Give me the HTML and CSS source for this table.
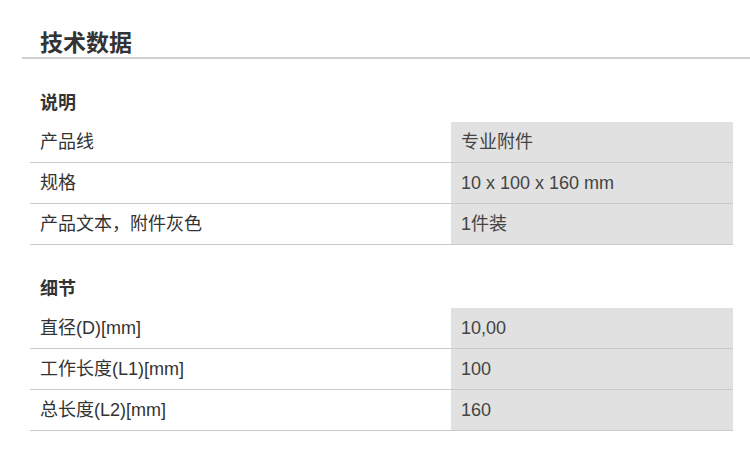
FILE: index.html
```html
<!DOCTYPE html>
<html lang="zh-CN">
<head>
<meta charset="utf-8">
<link rel="stylesheet" href="styles.css">
</head>
<body>
<div class="page">
  <h2 class="title">技术数据</h2>
  <section class="group">
    <h3 class="group-title">说明</h3>
    <div class="table">
      <div class="row"><div class="label">产品线</div><div class="value">专业附件</div></div>
      <div class="row"><div class="label">规格</div><div class="value">10 x 100 x 160 mm</div></div>
      <div class="row"><div class="label">产品文本，附件灰色</div><div class="value">1件装</div></div>
    </div>
  </section>
  <section class="group">
    <h3 class="group-title">细节</h3>
    <div class="table">
      <div class="row"><div class="label">直径(D)[mm]</div><div class="value">10,00</div></div>
      <div class="row"><div class="label">工作长度(L1)[mm]</div><div class="value">100</div></div>
      <div class="row"><div class="label">总长度(L2)[mm]</div><div class="value">160</div></div>
    </div>
  </section>
</div>
</body>
</html>
```
FILE: styles.css
```css
html, body {
  margin: 0;
  padding: 0;
  background: #fff;
}
body {
  font-family: "Liberation Sans", "Noto Sans CJK SC", sans-serif;
  color: #333;
}
.page {
  padding: 29px 0 0 22px;
}
.title {
  margin: 0;
  padding-left: 18px;
  font-size: 23px;
  line-height: 28px;
  font-weight: bold;
  color: #333;
  border-bottom: 2px solid #cfcfcf;
}
.group {
  margin: 25px 17px 0 8px;
}
.group-title {
  margin: 0;
  padding-left: 10px;
  font-size: 18px;
  line-height: 38px;
  font-weight: bold;
  color: #333;
}
.table {
  display: flex;
  flex-direction: column;
}
.row {
  display: grid;
  grid-template-columns: 421px 1fr;
  border-bottom: 1px solid #cacaca;
  font-size: 18px;
  line-height: 40px;
}
.label {
  padding-left: 10px;
  color: #333;
}
.value {
  padding-left: 10px;
  background: #e1e1e1;
  color: #444;
}
```
